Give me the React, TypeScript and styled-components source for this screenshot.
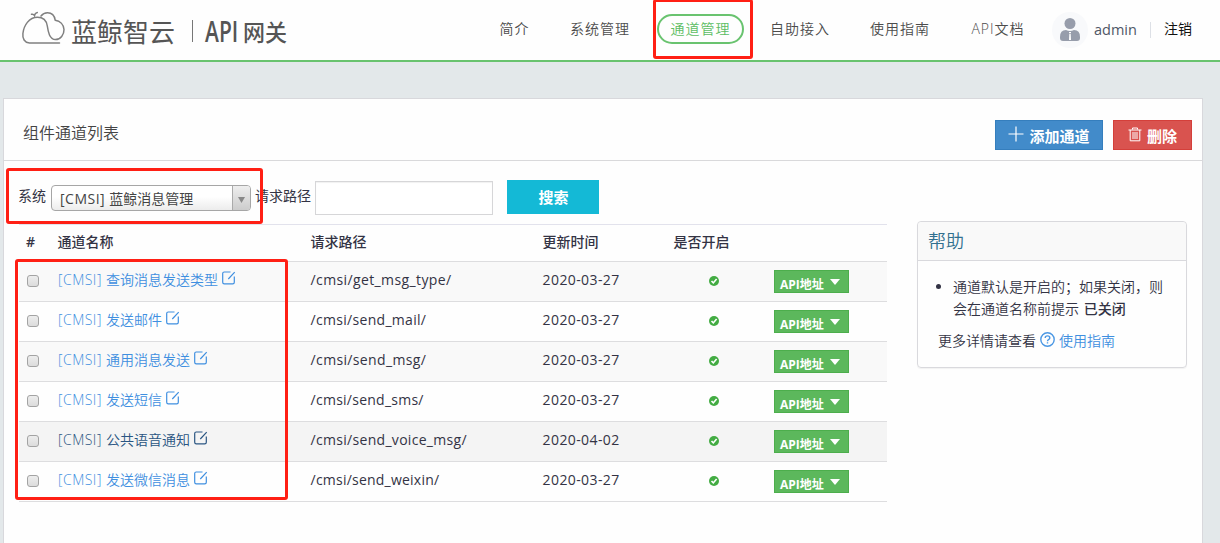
import React from 'react';
import styled, { createGlobalStyle } from 'styled-components';

const Global = createGlobalStyle`
  * { box-sizing: border-box; }
  body {
    margin: 0;
    background: #e3e8ea;
    color: #333344;
    font: 14px/20px "Open Sans", "Noto Sans CJK SC", sans-serif;
    overflow: hidden;
  }
`;

const Page = styled.div`
  width: 1220px;
  height: 543px;
  overflow: hidden;
  position: relative;
`;

const Header = styled.header`
  height: 62px;
  background: #fefefe;
  border-bottom: 2px solid #69c36f;
  display: flex;
  align-items: flex-start;
`;

const LogoArt = styled.svg`
  width: 300px;
  height: 60px;
  flex: none;
  display: block;
`;

const Nav = styled.nav`
  display: flex;
  gap: 14px;
  padding: 14px 0 0 186px;
`;

const NavItem = styled.a<{ $active?: boolean; $w: number }>`
  width: ${p => p.$w}px;
  height: 30px;
  display: flex;
  justify-content: center;
  align-items: center;
  white-space: nowrap;
  letter-spacing: 1px;
  font-weight: 350;
  border-radius: 15px;
  border: 2px solid ${p => (p.$active ? '#69c36f' : 'transparent')};
  color: ${p => (p.$active ? '#5cbd63' : '#4c4c4c')};
`;

const User = styled.div`
  display: flex;
  align-items: center;
  height: 60px;
  padding-left: 14px;
  color: #4f5666;
`;

const Avatar = styled.svg`
  width: 36px;
  height: 36px;
  margin-right: 6px;
`;

const UserName = styled.span`
  width: 56px;
  font-size: 14.5px;
`;

const Logout = styled.a`
  border-left: 1px solid #dde0e6;
  height: 16px;
  line-height: 14px;
  padding-left: 13px;
  color: #111;
`;

const Panel = styled.main`
  width: 1200px;
  height: 460px;
  margin: 36px 0 0 3px;
  background: #fefefe;
  border: 1px solid #d8d8dc;
`;

const PanelHead = styled.div`
  height: 62px;
  border-bottom: 1px solid #d9d9db;
  display: flex;
  align-items: center;
  gap: 10px;
  padding: 0 10px 0 19px;
`;

const Title = styled.h1`
  flex: 1;
  margin: 0;
  padding-top: 6px;
  font-size: 16px;
  font-weight: 350;
  line-height: 22px;
  color: #444;
`;

const Action = styled.button<{ $danger?: boolean }>`
  width: ${p => (p.$danger ? 79 : 108)}px;
  height: 30px;
  margin-top: 11px;
  padding: 0;
  display: flex;
  align-items: center;
  justify-content: center;
  gap: 5px;
  border: 1px solid ${p => (p.$danger ? '#d43f3a' : '#357ebd')};
  background: ${p => (p.$danger ? '#d9534f' : '#428bca')};
  color: #fff;
  font: bold 15px/26px "Noto Sans CJK SC", sans-serif;
  svg { margin-top: -2px; }
  span { padding-top: 2px; }
`;

const Body = styled.div`
  display: flex;
`;

const Left = styled.section`
  width: 868px;
  margin-left: 15px;
`;

const Filters = styled.div`
  height: 63px;
  padding-top: 19px;
  display: flex;
  align-items: flex-start;
`;

const Label = styled.label`
  width: 56px;
  line-height: 32px;
  white-space: nowrap;
`;

const SystemLabel = styled(Label)`
  width: 28px;
  margin-left: -1px;
`;

const Select = styled.div`
  width: 200px;
  height: 26px;
  margin: 5px 4px 0 5px;
  border: 1px solid #a6a6a6;
  border-radius: 4px;
  background: linear-gradient(#fff 45%, #ececec);
  display: flex;
  overflow: hidden;
  color: #444;
`;

const SelectText = styled.span`
  flex: 1;
  padding-left: 8px;
  line-height: 25px;
`;

const Prefix = styled.span`
  letter-spacing: 0.5px;
  white-space: pre;
`;

const SelectArrow = styled.span`
  width: 18px;
  border-left: 1px solid #aaa;
  background: linear-gradient(#eee, #ccc);
  display: flex;
  align-items: center;
  justify-content: center;
  padding-top: 3px;
`;

const PathInput = styled.input`
  width: 178px;
  height: 34px;
  margin: 1px 14px 0 4px;
  border: 1px solid #d6d6d8;
  background: #fff;
  box-shadow: inset 0 1px 1px rgba(0, 0, 0, 0.06);
`;

const Search = styled.button`
  width: 92px;
  height: 34px;
  padding: 0 0 0 1px;
  border: 0;
  background: #14b9d6;
  color: #fff;
  font: bold 15px/32px "Noto Sans CJK SC", sans-serif;
`;

const Row = styled.div<{ $bg?: string; $head?: boolean }>`
  display: grid;
  grid-template-columns: 39px 252px 232px 132px 100px 113px;
  align-items: center;
  height: ${p => (p.$head ? 38 : 40)}px;
  padding-bottom: ${p => (p.$head ? 2 : 0)}px;
  background: ${p => p.$bg || 'transparent'};
  border-bottom: 1px solid #dddddf;
  border-top: ${p => (p.$head ? '1px solid #e2e2ec' : '0')};
  font-weight: ${p => (p.$head ? 500 : 400)};
  line-height: 20px;
  > * { white-space: nowrap; }
`;

const Hash = styled.span`
  padding-left: 7px;
  font-weight: 600;
`;

const HeadCell = styled.span<{ $dx?: number }>`
  margin-left: ${p => p.$dx ?? -0.5}px;
`;

const Check = styled.span`
  width: 12px;
  height: 12px;
  margin: -2px 0 0 8px;
  border: 1px solid #a3a3a3;
  border-radius: 3px;
  background: linear-gradient(#ededed, #dcdcdc);
`;

const Link = styled.a<{ $dark?: boolean }>`
  color: ${p => (p.$dark ? '#2a5582' : '#3f8fe0')};
  display: flex;
  align-items: center;
  margin-top: -3px;
  font-weight: 350;
  svg { margin: -5px 0 0 4px; }
`;

const Value = styled.span<{ $ls: number }>`
  letter-spacing: ${p => p.$ls}px;
  margin: -4px 0 0 0.6px;
`;

const Status = styled.svg`
  width: 10px;
  height: 10px;
  margin: -2px 0 0 35px;
`;

const ApiButton = styled.button`
  width: 75px;
  height: 23px;
  padding: 0 8px 0 5px;
  border: 1px solid #4cae4c;
  background: #5cb85c;
  color: #fff;
  font: bold 12px/20px "Open Sans", "Noto Sans CJK SC", sans-serif;
  display: flex;
  align-items: center;
  justify-content: space-between;
  white-space: nowrap;
  span { padding-top: 7px; }
`;

const Help = styled.aside`
  width: 270px;
  height: 147px;
  margin: 60px 0 0 30px;
  border: 1px solid #d9d9dd;
  border-radius: 4px;
  box-shadow: 0 1px 1px rgba(0, 0, 0, 0.05);
`;

const HelpTitle = styled.h2`
  margin: 0;
  height: 39px;
  padding-left: 10px;
  font-size: 18px;
  line-height: 38px;
  font-weight: 350;
  color: #31708f;
  background: #f9f9f9;
  border-bottom: 1px solid #d9d9dd;
  border-radius: 4px 4px 0 0;
`;

const HelpList = styled.ul`
  margin: 15px 0 0;
  padding: 0 0 0 35px;
  line-height: 22px;
  white-space: nowrap;
  font-weight: 350;
  b { font-weight: 500; margin-left: 1px; }
`;

const More = styled.p`
  margin: 10px 0 0 20px;
  line-height: 22px;
  display: flex;
  align-items: center;
  font-weight: 350;
  svg { margin: -3px 4px 0; }
  a { color: #3f8fe0; }
`;

const Marker = styled.div<{ $x: number; $y: number; $w: number; $h: number }>`
  position: absolute;
  left: ${p => p.$x}px;
  top: ${p => p.$y}px;
  width: ${p => p.$w}px;
  height: ${p => p.$h}px;
  border: 3px solid #ff1f14;
  border-radius: 3px;
  pointer-events: none;
`;

const Logo = () => (
  <LogoArt viewBox="0 0 300 60">
    <g fill="none" stroke="#808080" strokeWidth="1.5" strokeLinecap="round">
      <path d="M59.500 43H29.500C24.500 42.600 22.300 38.500 22.900 33.500C23.800 25.500 29 17.300 37.500 17.300C43.500 17.300 46.500 21 47.300 26C48.200 32 49.500 39.300 55.500 39.600C60.500 39.600 64.200 34.500 64 29.500C63.700 24.500 60 20.900 55.200 20.200C54.500 15.500 51.500 12.800 47.500 12.800C44.800 12.800 42.500 14 41 16" />
      <path d="M31.500 14.300Q33.500 13.800 34.500 15.500Q35 13.200 37.300 12.600" />
    </g>
    <g fill="#555" fontFamily="'Noto Sans CJK SC', sans-serif">
      <text x="71" y="41.500" fontSize="26">蓝鲸智云</text>
      <text transform="translate(205 42) scale(0.75 1)" fontSize="28" fontFamily="'Open Sans', sans-serif" fontWeight="600">API</text>
      <text transform="translate(243 40.500) scale(0.957 1)" fontSize="23" fontWeight="500">网关</text>
    </g>
    <path d="M192.500 20V42" stroke="#777" />
  </LogoArt>
);

const EditIcon = () => (
  <svg width="14" height="14" viewBox="0 0 14 14" fill="none" stroke="currentColor">
    <path d="M8.500 1H2.300Q.7 1 .7 2.600V11.200Q.7 12.800 2.300 12.800H10.700Q12.300 12.800 12.300 11.200V5.500M6.300 8L12.700 1.200" strokeWidth="1.200" />
  </svg>
);

const Caret = ({ w, h, color }: { w: number; h: number; color: string }) => (
  <svg width={w} height={h} viewBox="0 0 10 6" preserveAspectRatio="none">
    <path d="M0 0H10L5 6Z" fill={color} />
  </svg>
);

const rows = [
  { name: '查询消息发送类型', path: '/cmsi/get_msg_type/', date: '2020-03-27', bg: '#f9f9f9', ls: 0.38 },
  { name: '发送邮件', path: '/cmsi/send_mail/', date: '2020-03-27', ls: 0.3 },
  { name: '通用消息发送', path: '/cmsi/send_msg/', date: '2020-03-27', bg: '#f9f9f9', ls: 0.35 },
  { name: '发送短信', path: '/cmsi/send_sms/', date: '2020-03-27', ls: 0.25 },
  { name: '公共语音通知', path: '/cmsi/send_voice_msg/', date: '2020-04-02', bg: '#f4f4f4', dark: true, ls: 0.3 },
  { name: '发送微信消息', path: '/cmsi/send_weixin/', date: '2020-03-27', ls: 0.22 },
];

const nav: [string, number][] = [
  ['简介', 57], ['系统管理', 86], ['通道管理', 87], ['自助接入', 84], ['使用指南', 88], ['API文档', 80],
];

export default function App() {
  return (
    <Page>
      <Global />
      <Header>
        <Logo />
        <Nav>
          {nav.map(([text, w]) => (
            <NavItem key={text} $w={w} $active={text === '通道管理'}>{text}</NavItem>
          ))}
        </Nav>
        <User>
          <Avatar viewBox="0 0 36 36">
            <circle cx="18" cy="18" r="18" fill="#f8f9fb" />
            <circle cx="18" cy="11.500" r="5.500" fill="#979dab" />
            <path d="M8 25Q8 18 14 18Q18 20 22 18Q28 18 28 25V26Q28 29 25 29H11Q8 29 8 26Z" fill="#979dab" />
            <path d="M17 20H19V21.300H17ZM17.300 22H18.700L19 28H17Z" fill="#fff" />
          </Avatar>
          <UserName>admin</UserName>
          <Logout>注销</Logout>
        </User>
      </Header>
      <Panel>
        <PanelHead>
          <Title>组件通道列表</Title>
          <Action>
            <svg width="16" height="16" viewBox="0 0 16 16"><path d="M8 .5V15.500M.5 8H15.500" stroke="#fff" strokeWidth="1.200" /></svg>
            <span>添加通道</span>
          </Action>
          <Action $danger>
            <svg width="14" height="15" viewBox="0 0 14 15" fill="none" stroke="#fff" strokeWidth="1">
              <path d="M.5 3H13.500M4.500 2.500V1H9.500V2.500M2.200 3V13.800H11.800V3M5 5V12M7 5V12M9 5V12" />
            </svg>
            <span>删除</span>
          </Action>
        </PanelHead>
        <Body>
          <Left>
            <Filters>
              <SystemLabel>系统</SystemLabel>
              <Select>
                <SelectText><Prefix>[CMSI] </Prefix>蓝鲸消息管理</SelectText>
                <SelectArrow><Caret w={7} h={6} color="#888" /></SelectArrow>
              </Select>
              <Label>请求路径</Label>
              <PathInput />
              <Search>搜索</Search>
            </Filters>
            <Row $head>
              <Hash>#</Hash><HeadCell>通道名称</HeadCell><HeadCell $dx={0.5}>请求路径</HeadCell>
              <HeadCell $dx={0.5}>更新时间</HeadCell><HeadCell>是否开启</HeadCell><span />
            </Row>
            {rows.map(r => (
              <Row key={r.path} $bg={r.bg}>
                <Check />
                <Link $dark={r.dark}><Prefix>[CMSI] </Prefix>{r.name}<EditIcon /></Link>
                <Value $ls={r.ls}>{r.path}</Value>
                <Value $ls={0.4}>{r.date}</Value>
                <Status viewBox="0 0 10 10">
                  <circle cx="5" cy="5" r="5" fill="#43ac43" />
                  <path d="M2.500 5L4.300 6.900L7.600 3" fill="none" stroke="#fff" strokeWidth="1.600" />
                </Status>
                <ApiButton><span>API地址</span><Caret w={10} h={6} color="#fff" /></ApiButton>
              </Row>
            ))}
          </Left>
          <Help>
            <HelpTitle>帮助</HelpTitle>
            <HelpList>
              <li>通道默认是开启的；如果关闭，则<br />会在通道名称前提示 <b>已关闭</b></li>
            </HelpList>
            <More>
              更多详情请查看
              <svg width="15" height="15" viewBox="0 0 15 15" fill="none" stroke="#4a97e4" strokeWidth="1.400">
                <circle cx="7.500" cy="7.500" r="6.700" />
                <path d="M5.200 6Q5.200 3.900 7.500 3.900T9.800 5.900Q9.800 7 8.500 7.600Q7.500 8.100 7.500 9.200M7.500 10.200V11.600" />
              </svg>
              <a>使用指南</a>
            </More>
          </Help>
        </Body>
      </Panel>
      <Marker $x={653} $y={-1} $w={100} $h={60} />
      <Marker $x={6} $y={168} $w={257} $h={56} />
      <Marker $x={15} $y={259} $w={273} $h={241} />
    </Page>
  );
}
